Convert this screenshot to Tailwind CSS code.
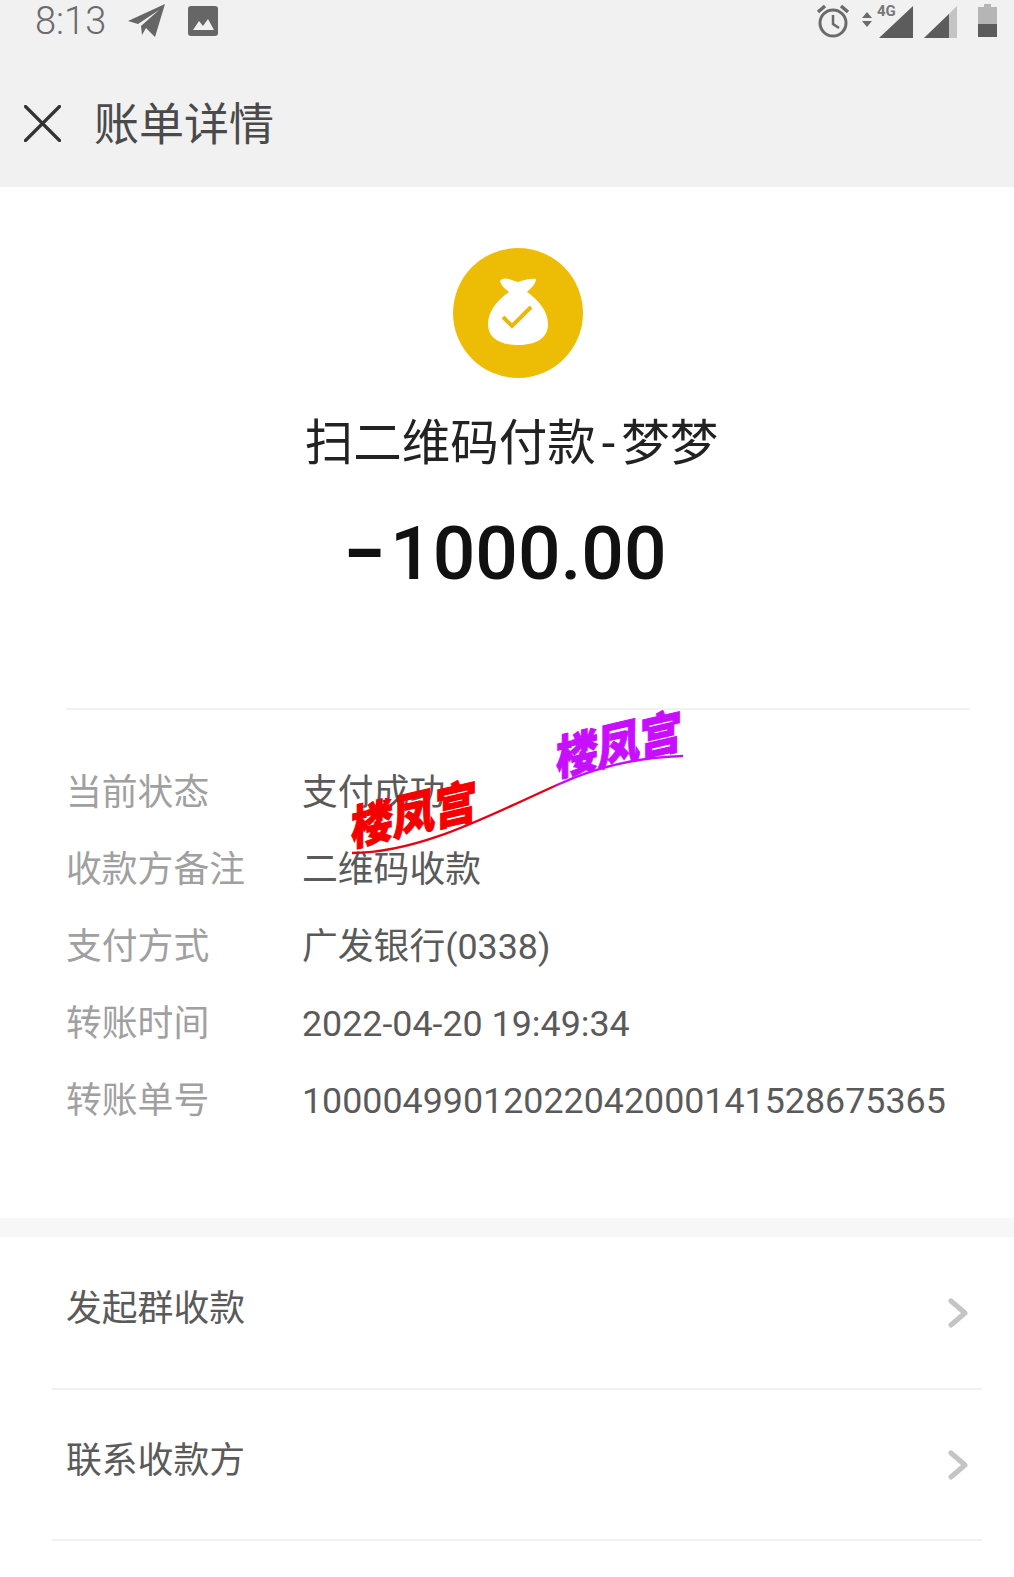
<!DOCTYPE html>
<html lang="zh-CN">

<head>
    <meta charset="UTF-8">
    <meta name="viewport" content="width=device-width, initial-scale=1.0">
    <title>账单详情</title>
    <script src="https://cdn.jsdelivr.net/npm/@tailwindcss/browser@4"></script>
</head>

<body class="bg-white font-['Roboto','Noto_Sans_CJK_SC',sans-serif]">
    <div class="relative w-[1014px] h-[1577px] overflow-hidden">

        <!-- status bar -->
        <div class="h-[62px] bg-[#f1f1f1] flex items-start justify-between pl-[35px] pr-[17px] pt-[3px] text-[#6b6b6b]">
            <div class="flex items-center gap-[22px] h-[36px]">
                <span class="text-[38px] leading-[36px] font-light">8:13</span>
                <svg class="w-[38px] h-[34px]" viewBox="0 0 38 34" fill="#666">
                    <path d="M0 17 L37 0 L27 33 L18 24 L14 31 L13 22 L31 6 L10 20 Z" />
                </svg>
                <svg class="w-[30px] h-[30px]" viewBox="0 0 30 30">
                    <rect width="30" height="30" rx="3" fill="#666" />
                    <path d="M5 24 L11 15 L15 20 L20 13 L26 24 Z" fill="#f1f1f1" />
                </svg>
            </div>
            <div class="flex items-center h-[36px]">
                <svg class="w-[34px] h-[34px] -ml-[2px]" viewBox="0 0 34 34" fill="none" stroke="#6b6b6b" stroke-width="3">
                    <circle cx="17" cy="19" r="13" />
                    <path d="M17 11 V20 L23 24" stroke-width="2.5" />
                    <path d="M2 8 L9 2 M32 8 L25 2" stroke-width="3.5" />
                </svg>
                <svg class="w-[54px] h-[36px] ml-[9px]" viewBox="0 0 54 36">
                    <path d="M3 15 L8 9 L13 15 Z M3 18 H13 L8 24 Z" fill="#6b6b6b" />
                    <text x="18" y="13" font-size="15" font-weight="700" fill="#777" font-family="Roboto">4G</text>
                    <path d="M20 35 L54 3 V35 Z" fill="#5c5c5c" />
                </svg>
                <svg class="w-[33px] h-[36px] ml-[11px]" viewBox="0 0 33 36">
                    <path d="M0 35 L33 3 V35 Z" fill="#c4c4c4" />
                    <path d="M0 35 L25 11 V35 Z" fill="#5c5c5c" />
                </svg>
                <svg class="w-[19px] h-[34px] ml-[21px]" viewBox="0 0 19 34">
                    <path d="M6 0 H13 V3 H19 V20 H0 V3 H6 Z" fill="#b5b5b5" />
                    <rect y="20" width="19" height="13" fill="#5c5c5c" />
                </svg>
            </div>
        </div>

        <!-- title bar -->
        <div class="h-[125px] bg-[#f1f1f1] flex items-start pl-[24px]">
            <svg class="w-[37px] h-[37px] mt-[43px]" viewBox="0 0 37 37" stroke="#333" stroke-width="3.2" stroke-linecap="round">
                <path d="M1.5 1.5 L35.5 35.5 M35.5 1.5 L1.5 35.5" />
            </svg>
            <span class="ml-[33px] mt-[36px] text-[45px] leading-[56px] text-[#4a4a4a]">账单详情</span>
        </div>

        <!-- payment summary -->
        <div class="flex flex-col items-center pl-[22px]">
            <svg class="w-[130px] h-[130px] mt-[61px]" viewBox="0 0 130 130">
                <circle cx="65" cy="65" r="65" fill="#edbd06" />
                <path d="M47 33 C51 28 58 32 65 34 C71 32 78 30 83 31 C83 36 78 40 74 44 C86 52 95 64 95 76 C95 91 82 97 65 97 C48 97 35 91 35 76 C35 64 44 52 56 44 C52 41 48 37 47 33 Z" fill="#fff" />
                <path d="M50 69 L59 78 L78 59" fill="none" stroke="#e8b90a" stroke-width="4" />
            </svg>
            <h1 class="mt-[36px] -ml-[13px] text-[48.5px] leading-[60px] font-normal text-[#222] whitespace-nowrap">扫二维码付款<span class="mx-[6px]">-</span>梦梦</h1>
            <p class="mt-[34px] -ml-[26px] text-[75px] leading-[90px] font-medium text-[#111] whitespace-nowrap"><span class="mr-[5px] font-bold">−</span>1000.00</p>
        </div>

        <!-- bill fields -->
        <div class="mt-[110px] ml-[66px] mr-[44px] border-t-2 border-[#f1f1f1]">
            <div class="pt-[45px] flex flex-col text-[35.8px]">
                <div class="h-[77px] flex items-center">
                    <span class="w-[236px] text-[#a0a0a0]">当前状态</span>
                    <span class="text-[#5a5a5a]">支付成功</span>
                </div>
                <div class="h-[77px] flex items-center">
                    <span class="w-[236px] text-[#a0a0a0]">收款方备注</span>
                    <span class="text-[#5a5a5a]">二维码收款</span>
                </div>
                <div class="h-[77px] flex items-center">
                    <span class="w-[236px] text-[#a0a0a0]">支付方式</span>
                    <span class="text-[#5a5a5a]">广发银行(0338)</span>
                </div>
                <div class="h-[77px] flex items-center">
                    <span class="w-[236px] text-[#a0a0a0]">转账时间</span>
                    <span class="text-[#5a5a5a]">2022-04-20 19:49:34</span>
                </div>
                <div class="h-[77px] flex items-center">
                    <span class="w-[236px] text-[#a0a0a0]">转账单号</span>
                    <span class="text-[#5a5a5a] whitespace-nowrap">10000499012022042000141528675365</span>
                </div>
            </div>
        </div>

        <div class="mt-[78px] h-[19px] bg-[#f7f7f7]"></div>

        <!-- actions -->
        <div class="ml-[52px] mr-[32px]">
            <div class="h-[153px] border-b-2 border-[#f1f1f1] flex items-center justify-between pl-[14px] pr-[14px]">
                <span class="-mt-[6px] text-[35.8px] text-[#5a5a5a]">发起群收款</span>
                <svg class="w-[20px] h-[30px]" viewBox="0 0 20 30" fill="none" stroke="#c4c4c4" stroke-width="5" stroke-linecap="round" stroke-linejoin="round">
                    <path d="M3 3 L17 15 L3 27" />
                </svg>
            </div>
            <div class="h-[151px] border-b-2 border-[#f1f1f1] flex items-center justify-between pl-[14px] pr-[14px]">
                <span class="-mt-[6px] text-[35.8px] text-[#5a5a5a]">联系收款方</span>
                <svg class="w-[20px] h-[30px]" viewBox="0 0 20 30" fill="none" stroke="#c4c4c4" stroke-width="5" stroke-linecap="round" stroke-linejoin="round">
                    <path d="M3 3 L17 15 L3 27" />
                </svg>
            </div>
        </div>

        <!-- stamped marks over the fields -->
        <svg class="absolute left-0 top-0 w-[1014px] h-[1577px] pointer-events-none" viewBox="0 0 1014 1577">
            <defs>
                <linearGradient id="markLine" gradientUnits="userSpaceOnUse" x1="352" y1="0" x2="683" y2="0">
                    <stop offset="0" stop-color="#e60012" />
                    <stop offset="0.6" stop-color="#e60012" />
                    <stop offset="0.63" stop-color="#c40fff" />
                    <stop offset="1" stop-color="#c40fff" />
                </linearGradient>
            </defs>
            <path d="M352 853 C420 853 490 815 557 785 C600 765 640 757 683 756" fill="none" stroke="url(#markLine)" stroke-width="2.4" />
            <g font-family="'Noto Sans CJK SC', sans-serif" font-weight="900" font-size="42" stroke-width="1">
                <text transform="translate(351 846) skewY(-13) scale(1 1.12)" fill="#f40000" stroke="#f40000">楼凤宫</text>
                <text transform="translate(556 776) skewY(-13) scale(1 1.12)" fill="#c80eff" stroke="#c80eff">楼凤宫</text>
            </g>
        </svg>
    </div>
</body>

</html>
